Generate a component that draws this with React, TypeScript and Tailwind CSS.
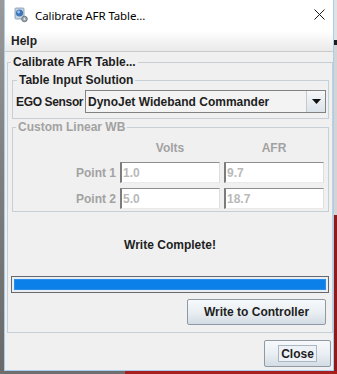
import React from "react";

const F = "font-['Liberation_Sans',Arial,sans-serif]";

function Field({ v }: { v: string }) {
  return (
    <div
      className={`h-[21px] bg-white border-t border-l-2 border-r border-b border-t-[#8e8e8e] border-l-[#7c7c7c] border-r-[#dedede] border-b-[#eaeaea] pl-[1px] flex items-center text-[12px] leading-[14px] text-[#b9b9b9] ${F}`}
    >
      {v}
    </div>
  );
}

function JButton({ label, w, h, focus }: { label: string; w: string; h: string; focus?: boolean }) {
  return (
    <div
      className={`${w} ${h} rounded-[2px] border border-[#8d99a4] bg-linear-to-b from-[#f7f9fb] via-[#eaeff3] to-[#d3dce4] flex items-center justify-center text-[12px] leading-[14px] font-bold text-[#1e1e1e] ${F}`}
    >
      {focus ? (
        <span className="border border-[#aab8c6] bg-[#eef2f6] px-[2px] h-[17px] flex items-center">{label}</span>
      ) : (
        label
      )}
    </div>
  );
}

export default function App() {
  return (
    <div className="w-[337px] h-[374px] flex flex-col overflow-hidden bg-[#f0f0f0]">
      <div className="flex h-[371px]">
        {/* left desktop strip */}
        <div className="w-[4px] h-full bg-linear-to-b from-[#9a9a9a] via-[#7d7d7d] to-[#6a6a6a]" />
        {/* window */}
        <div className="w-[330px] h-full flex flex-col border-l border-r border-b border-[#a9cdee] bg-[#f0f0f0]">
          {/* title bar */}
          <div className="h-[31px] bg-white flex items-center shrink-0">
            <svg width="16" height="16" viewBox="0 0 16 16" className="ml-[8px] mt-[-1px]">
              <rect x="2" y="1" width="9" height="11" rx="1" fill="#c9d6e3" stroke="#7f93a8" strokeWidth="0.8" />
              <circle cx="6.5" cy="6" r="3.6" fill="#3f76b8" />
              <circle cx="5.6" cy="5" r="1.4" fill="#9cc3ea" />
              <circle cx="11.5" cy="12" r="2.8" fill="#9aa5ae" stroke="#5f6b75" strokeWidth="0.8" />
              <circle cx="11.5" cy="12" r="1" fill="#e6e6e6" />
            </svg>
            <span className="ml-[6px] text-[11.5px] leading-[14px] text-black font-['Noto_Sans',sans-serif] tracking-[-0.1px]">
              Calibrate AFR Table...
            </span>
            <svg width="11" height="11" viewBox="0 0 11 11" className="ml-auto mr-[8px] mt-[-3px]">
              <path d="M0.5 0.5 L10.5 10.5 M10.5 0.5 L0.5 10.5" stroke="#1a1a1a" strokeWidth="1" />
            </svg>
          </div>
          {/* menu bar */}
          <div className="h-[21px] shrink-0 bg-linear-to-b from-[#ffffff] to-[#e9e9e9] border-b border-[#cbcbcb] flex items-center">
            <span className={`ml-[6px] text-[12px] leading-[14px] font-bold text-[#222] ${F}`}>Help</span>
          </div>
          {/* content */}
          <div className="flex-1 flex flex-col">
            <fieldset className="mt-[3px] ml-[2px] mr-0 border border-[#c6ced6] pb-[7px]">
              <legend className={`ml-[3px] px-[2px] text-[12px] leading-[14px] font-bold text-[#1e1e1e] ${F}`}>
                Calibrate AFR Table...
              </legend>
              <div className="pl-[3px] pr-[3px] flex flex-col">
                {/* Table Input Solution */}
                <fieldset className="mt-[4px] ml-[1px] border border-[#c6ced6] pb-[5px]">
                  <legend className={`ml-[4px] px-[2px] text-[12px] leading-[14px] font-bold text-[#1e1e1e] ${F}`}>
                    Table Input Solution
                  </legend>
                  <div className="flex items-center pt-[3px] pl-[3px] pr-[2px]">
                    <span className={`w-[69px] shrink-0 whitespace-nowrap tracking-[-0.35px] text-[12px] leading-[14px] font-bold text-[#1e1e1e] ${F}`}>
                      EGO Sensor
                    </span>
                    <div className="flex-1 h-[23px] border border-[#828282] bg-[#f3f3f3] flex">
                      <div className={`flex-1 flex items-center pl-[2px] whitespace-nowrap text-[12px] leading-[14px] font-bold text-[#1e1e1e] ${F}`}>
                        DynoJet Wideband Commander
                      </div>
                      <div className="w-[19px] border-l border-[#c8c8c8] bg-linear-to-b from-[#f6f8fa] to-[#dbe3ea] flex items-center justify-center">
                        <svg width="9" height="5" viewBox="0 0 9 5">
                          <path d="M0 0 H9 L4.5 5 Z" fill="#111" />
                        </svg>
                      </div>
                    </div>
                  </div>
                </fieldset>
                {/* Custom Linear WB */}
                <fieldset className="mt-[1px] ml-[1px] border border-[#c6ced6] pb-[2px]">
                  <legend className={`ml-[3px] px-[2px] text-[12px] leading-[14px] font-bold text-[#a2a2a2] ${F}`}>
                    Custom Linear WB
                  </legend>
                  <div
                    className={`mt-[7px] pr-[4px] grid grid-cols-[1fr_100px_100px] gap-x-[4px] items-center text-[12px] leading-[14px] font-bold text-[#a2a2a2] ${F}`}
                  >
                    <div />
                    <div className="text-center">Volts</div>
                    <div className="text-center">AFR</div>
                  </div>
                  <div
                    className={`mt-[7px] pr-[4px] grid grid-cols-[1fr_100px_100px] gap-x-[4px] gap-y-[5px] items-center text-[12px] leading-[14px] font-bold text-[#a2a2a2] ${F}`}
                  >
                    <div className="text-right">Point 1</div>
                    <Field v="1.0" />
                    <Field v="9.7" />
                    <div className="text-right">Point 2</div>
                    <Field v="5.0" />
                    <Field v="18.7" />
                  </div>
                </fieldset>
              </div>
              <div className={`mt-[26px] text-center text-[12px] leading-[14px] font-bold text-[#1e1e1e] ${F}`}>
                Write Complete!
              </div>
              <div className="mt-[24px] mx-[3px] h-[17px] border border-[#666a6e] bg-[#e8eef3] p-[2px]">
                <div className="h-full bg-[#0b80e8] border border-[#2a8ee8]" />
              </div>
              <div className="mt-[6px] flex justify-end pr-[6px]">
                <JButton label="Write to Controller" w="w-[139px]" h="h-[26px]" />
              </div>
            </fieldset>
            <div className="mt-[7px] flex justify-end pr-[2px]">
              <JButton label="Close" w="w-[67px]" h="h-[27px]" focus />
            </div>
          </div>
        </div>
        {/* right desktop strip */}
        <div className="w-[3px] h-full flex flex-col">
          <div className="h-[40px] bg-[#e2e2e2]" />
          <div className="h-[5px] bg-[#1e1e1e]" />
          <div className="h-[170px] bg-[#d4d4d4]" />
          <div className="flex-1 bg-[#8e1a1a]" />
        </div>
      </div>
      <div className="h-[3px] flex">
        <div className="w-[125px] bg-[#6e6e6e]" />
        <div className="flex-1 bg-[#a81e1e]" />
      </div>
    </div>
  );
}
